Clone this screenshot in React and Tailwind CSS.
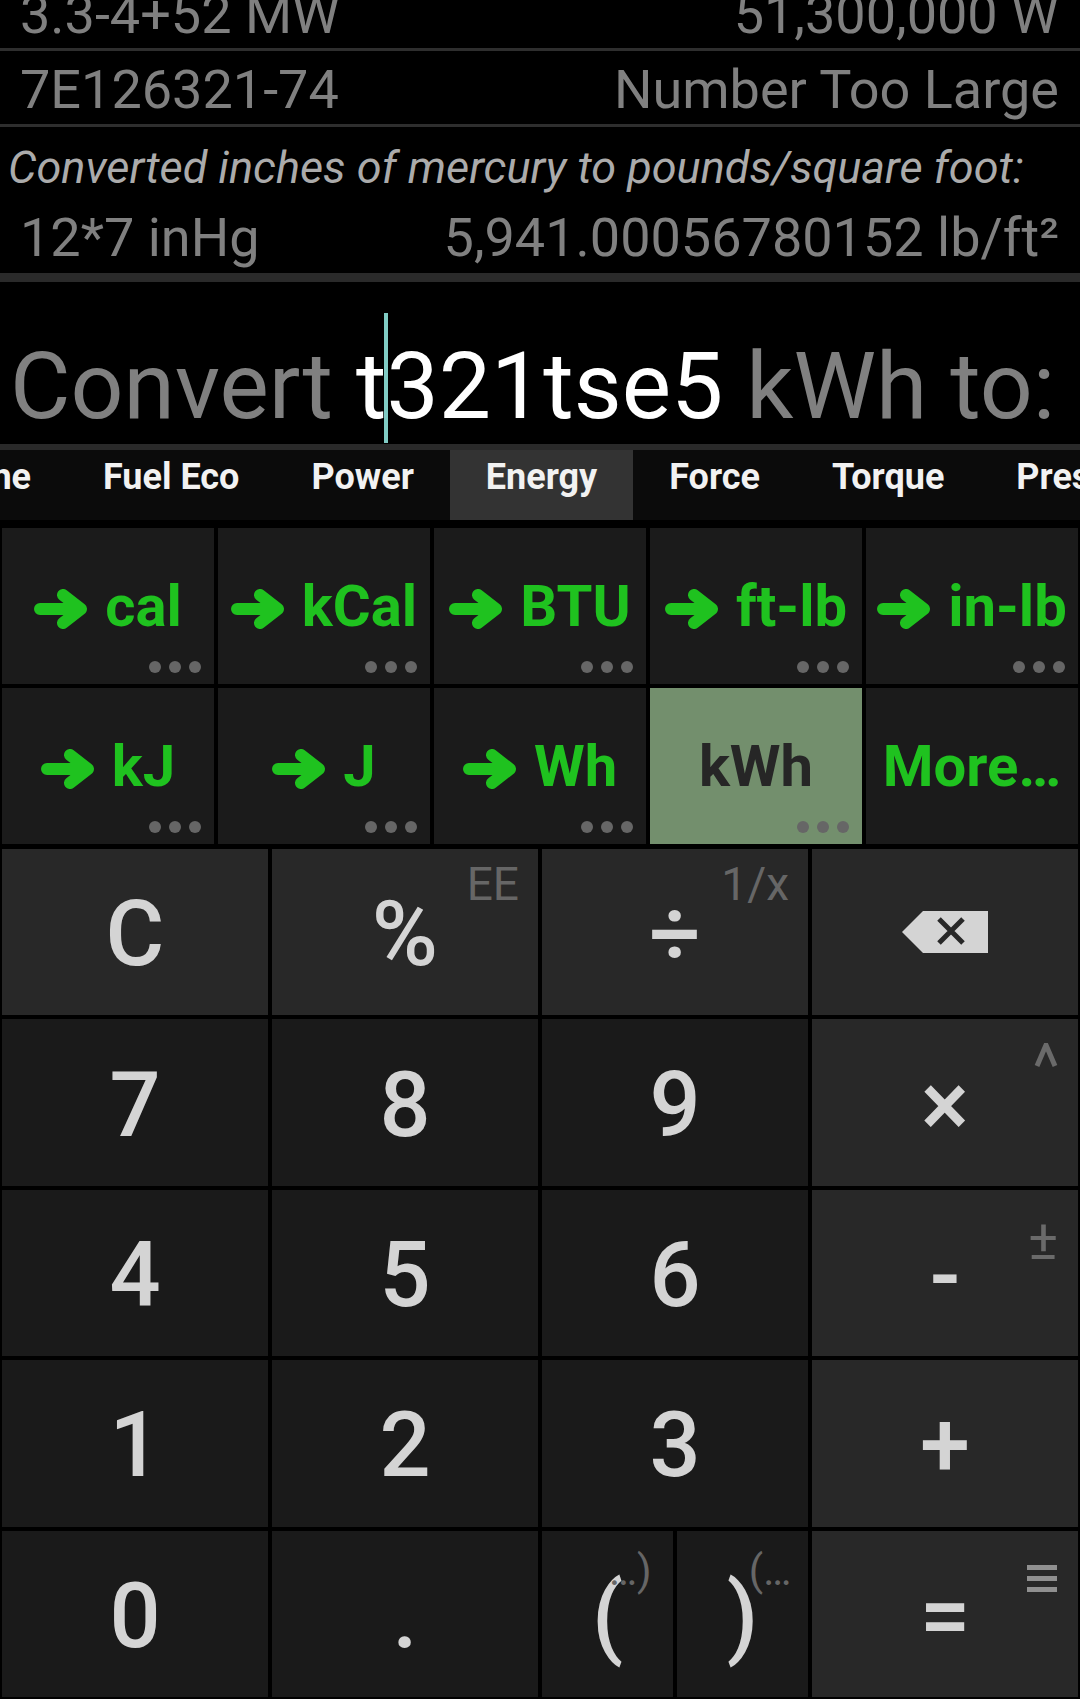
import React from 'react';

const units = [
    { label: 'cal', arrow: true, dots: true },
    { label: 'kCal', arrow: true, dots: true },
    { label: 'BTU', arrow: true, dots: true },
    { label: 'ft-lb', arrow: true, dots: true },
    { label: 'in-lb', arrow: true, dots: true },
    { label: 'kJ', arrow: true, dots: true },
    { label: 'J', arrow: true, dots: true },
    { label: 'Wh', arrow: true, dots: true },
    { label: 'kWh', selected: true, dots: true },
    { label: 'More\u2026' },
];

const tabs = ['Fuel Eco', 'Power', 'Energy', 'Force', 'Torque', 'Pressure'];

const Arrow = () => (
    <svg width="54" height="40" viewBox="0 0 54 40" className="translate-y-[3px] shrink-0">
        <path d="M6 20 H44 M29 6 L47 20 L29 34" fill="none" stroke="#1fc21f" strokeWidth="12" strokeLinecap="round" strokeLinejoin="round" />
    </svg>
);

const Dots = () => (
    <div className="absolute right-[13px] bottom-[11px] flex gap-[8px]">
        <span className="w-[12px] h-[12px] rounded-full bg-[#666]" />
        <span className="w-[12px] h-[12px] rounded-full bg-[#666]" />
        <span className="w-[12px] h-[12px] rounded-full bg-[#666]" />
    </div>
);

const UnitCell = ({ u }) => (
    <div className={`relative flex items-center justify-center gap-[17px] text-[58px] font-bold leading-none ${u.selected ? 'bg-[#738f6d] text-[#262626]' : 'bg-[#1b1b1b] text-[#1fc21f]'}`}>
        {u.arrow && <Arrow />}
        <span>{u.label}</span>
        {u.dots && <Dots />}
    </div>
);

// calculator key
const Key = ({ children, op, sup }) => (
    <div className={`relative flex items-center justify-center pt-[6px] text-[90px] font-medium leading-none text-[#d4d4d4] ${op ? 'bg-[#282828]' : 'bg-[#1a1a1a]'}`}>
        {children}
        {sup}
    </div>
);

const Backspace = () => (
    <svg width="86" height="42" viewBox="0 0 86 42" className="-mt-[6px]">
        <path d="M0 21 L21 0 H86 V42 H21 Z" fill="#d4d4d4" />
        <path d="M37 8 L61 32 M61 8 L37 32" stroke="#282828" strokeWidth="5" />
    </svg>
);

const HistRow = ({ left, right, className }) => (
    <div className={`shrink-0 flex justify-between items-start pl-[20px] pr-[21px] text-[54px] leading-none text-[#808080] whitespace-nowrap ${className}`}>
        <span>{left}</span>
        <span>{right}</span>
    </div>
);

export default function App() {
    return (
        <div className="w-[1080px] h-[1699px] bg-black overflow-hidden flex flex-col font-['Roboto',sans-serif]">
            {/* history */}
            <div className="h-[273px] shrink-0 overflow-hidden flex flex-col">
                <HistRow left="3.3-4+52 MW" right="51,300,000 W" className="-mt-[24px] h-[72px] pt-[12px]" />
                <div className="h-[3px] shrink-0 bg-[#2e2e2e]" />
                <HistRow left="7E126321-74" right="Number Too Large" className="h-[73px] pt-[12px]" />
                <div className="h-[3px] shrink-0 bg-[#2e2e2e]" />
                <div className="flex-1 pt-[18px]">
                    <div className="pl-[8px] text-[45px] italic leading-none text-[#ababab] whitespace-nowrap">
                        Converted inches of mercury to pounds/square foot:
                    </div>
                    <HistRow left="12*7 inHg" right={'5,941.00056780152 lb/ft\u00b2'} className="pt-[21px]" />
                </div>
            </div>
            <div className="h-[9px] shrink-0 bg-[#2a2a2a]" />

            {/* input */}
            <div className="h-[162px] shrink-0 pl-[10px] pt-[58px] text-[93px] leading-none whitespace-nowrap text-[#808080]">
                Convert <span className="text-white">t<span className="relative"><span className="absolute -left-[2px] -top-[19px] w-[4px] h-[130px] bg-[#80cbc4]" /></span>321tse5</span> kWh to:
            </div>
            <div className="h-[6px] shrink-0 bg-[#2a2a2a]" />

            {/* category tabs */}
            <div className="h-[70px] shrink-0 flex bg-[#0b0b0b] text-[36px] font-bold leading-none text-[#f2f2f2] overflow-hidden whitespace-nowrap">
                <div className="w-[67px] shrink-0 flex justify-end overflow-hidden">
                    <div className="shrink-0 px-[36px] pt-[9px]">Time Zone</div>
                </div>
                {tabs.map((t) => (
                    <div key={t} className={`shrink-0 px-[36px] pt-[9px] ${t === 'Energy' ? 'bg-[#333]' : ''}`}>{t}</div>
                ))}
            </div>

            {/* unit buttons */}
            <div className="shrink-0 grid grid-cols-5 grid-rows-[156px_156px] gap-[4px] px-[2px] pt-[8px]">
                {units.map((u) => <UnitCell key={u.label} u={u} />)}
            </div>

            {/* keypad */}
            <div className="flex-1 grid grid-cols-4 grid-rows-5 gap-[4px] px-[2px] pt-[5px] pb-[2px]">
                <Key op>C</Key>
                <Key op sup={<span className="absolute top-[12px] right-[19px] text-[46px] font-normal text-[#666]">EE</span>}>%</Key>
                <Key op sup={<span className="absolute top-[12px] right-[19px] text-[46px] font-normal text-[#666]">1/x</span>}>÷</Key>
                <Key op><Backspace /></Key>

                <Key>7</Key>
                <Key>8</Key>
                <Key>9</Key>
                <Key op sup={
                    <svg width="24" height="24" viewBox="0 0 24 24" className="absolute top-[24px] right-[20px]">
                        <path d="M3 23 L12 2 L21 23" fill="none" stroke="#6a6a6a" strokeWidth="5" />
                    </svg>
                }>×</Key>

                <Key>4</Key>
                <Key>5</Key>
                <Key>6</Key>
                <Key op sup={<span className="absolute top-[22px] right-[20px] text-[56px] font-normal text-[#6a6a6a]">±</span>}>-</Key>

                <Key>1</Key>
                <Key>2</Key>
                <Key>3</Key>
                <Key op>+</Key>

                <Key>0</Key>
                <Key>.</Key>
                <div className="grid grid-cols-2 gap-[4px]">
                    <Key>
                        <span className="relative">(
                            <span className="absolute left-[17px] -top-[22px] text-[42px] font-normal text-[#666]">…)</span>
                        </span>
                    </Key>
                    <Key>
                        <span className="relative">)
                            <span className="absolute left-[22px] -top-[22px] text-[42px] font-normal text-[#666]">(…</span>
                        </span>
                    </Key>
                </div>
                <Key op sup={
                    <div className="absolute top-[34px] right-[21px] flex flex-col gap-[6px]">
                        <span className="w-[30px] h-[5px] bg-[#909090]" />
                        <span className="w-[30px] h-[5px] bg-[#909090]" />
                        <span className="w-[30px] h-[5px] bg-[#909090]" />
                    </div>
                }>=</Key>
            </div>
        </div>
    );
}
